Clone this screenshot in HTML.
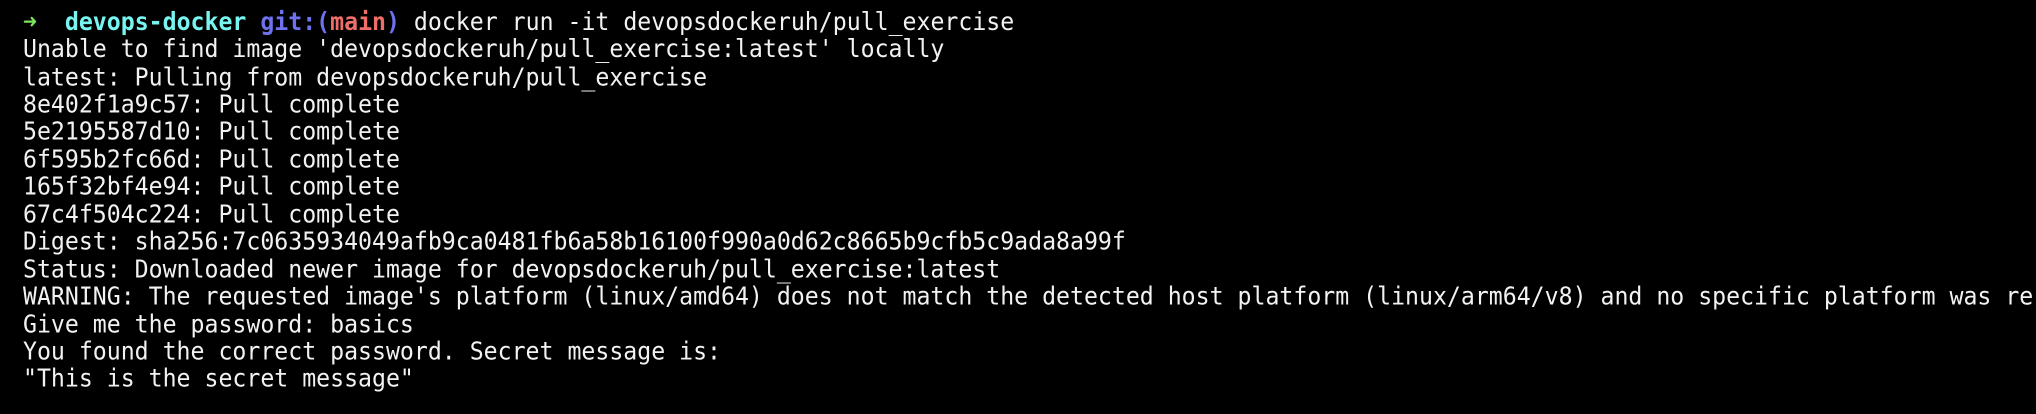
<!DOCTYPE html>
<html><head><meta charset="utf-8"><style>
html,body{margin:0;padding:0;background:#000;width:2036px;height:414px;overflow:hidden}
pre{margin:0;padding:7.6px 0 0 23px;font-family:"DejaVu Sans Mono","Liberation Mono",monospace;font-size:23.2px;line-height:25.46px;color:#f2f2f2;white-space:pre;transform:scaleY(1.08);transform-origin:0 0}
.g{color:#7ee35f;font-weight:bold}.c{color:#78f5f0;font-weight:bold}.b{color:#6e72ee;font-weight:bold}.r{color:#ee6f6a;font-weight:bold}
</style></head><body><pre><span class="g">➜</span>  <span class="c">devops-docker</span> <span class="b">git:(</span><span class="r">main</span><span class="b">)</span> docker run -it devopsdockeruh/pull_exercise
Unable to find image 'devopsdockeruh/pull_exercise:latest' locally
latest: Pulling from devopsdockeruh/pull_exercise
8e402f1a9c57: Pull complete
5e2195587d10: Pull complete
6f595b2fc66d: Pull complete
165f32bf4e94: Pull complete
67c4f504c224: Pull complete
Digest: sha256:7c0635934049afb9ca0481fb6a58b16100f990a0d62c8665b9cfb5c9ada8a99f
Status: Downloaded newer image for devopsdockeruh/pull_exercise:latest
WARNING: The requested image's platform (linux/amd64) does not match the detected host platform (linux/arm64/v8) and no specific platform was re
Give me the password: basics
You found the correct password. Secret message is:
"This is the secret message"</pre></body></html>
